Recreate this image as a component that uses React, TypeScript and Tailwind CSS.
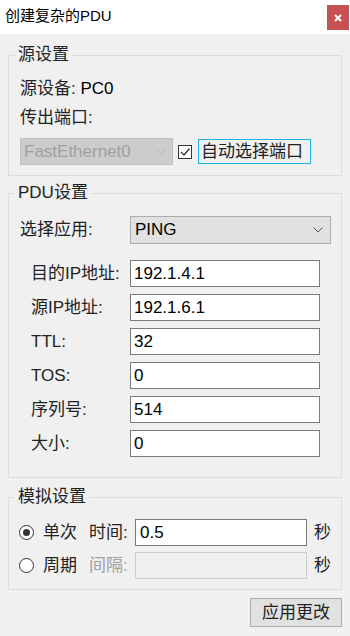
import type { ReactNode } from "react";

const FONT = "font-['Liberation_Sans','Noto_Sans_CJK_SC',sans-serif]";

function Chevron({ color }: { color: string }) {
  return (
    <svg width="10" height="6" viewBox="0 0 10 6" className="shrink-0">
      <path d="M0.5 0.5 L5 5 L9.5 0.5" fill="none" stroke={color} strokeWidth="1" />
    </svg>
  );
}

function Group({ title, className, children }: { title: string; className?: string; children: ReactNode }) {
  return (
    <fieldset className={"mx-2 border border-[#dcdcdc] " + (className ?? "")}>
      <legend className="ml-[6px] px-[3px] text-[17px] leading-[20px] text-[#222]">{title}</legend>
      {children}
    </fieldset>
  );
}

function Field({ label, value }: { label: string; value: string }) {
  return (
    <div className="flex h-[27px] items-center">
      <div className="w-[110px] pl-[11px] text-[17px] text-[#222]">{label}</div>
      <div className="flex h-[27px] w-[190px] items-center border border-[#7a7a7a] bg-white pl-[3px] text-[17px] text-black">
        {value}
      </div>
    </div>
  );
}

function Radio({ checked }: { checked?: boolean }) {
  return (
    <div className="flex h-[15px] w-[15px] items-center justify-center rounded-full border border-[#333] bg-white">
      {checked && <div className="h-[7px] w-[7px] rounded-full bg-[#333]" />}
    </div>
  );
}

export default function App() {
  return (
    <div className={"flex h-[636px] w-[350px] flex-col overflow-hidden bg-[#f0f0f0] " + FONT}>
      {/* title bar */}
      <div className="flex h-[34px] items-start justify-between bg-white">
        <div className="pl-[5px] pt-[6px] text-[15px] leading-[20px] text-black">创建复杂的PDU</div>
        <div className="mr-[1px] mt-[5px] flex h-[25px] w-[22px] items-center justify-center bg-[#c75050]">
          <svg width="8" height="8" viewBox="0 0 8 8">
            <path d="M1 1 L7 7 M7 1 L1 7" stroke="white" strokeWidth="2" />
          </svg>
        </div>
      </div>

      {/* 源设置 */}
      <Group title="源设置" className="mt-[11px]">
        <div className="pl-[11px] pb-[10px] pt-[14px]">
          <div className="h-[20px] text-[17px] leading-[20px] text-[#222]">
            源设备: <span className="text-black">PC0</span>
          </div>
          <div className="mt-[9px] h-[20px] text-[17px] leading-[20px] text-[#222]">传出端口:</div>
          <div className="mt-[10px] flex items-center">
            <div className="flex h-[27px] w-[153px] items-center justify-between border border-[#bfbfbf] bg-[#cccccc] pl-[3px] pr-[6px] text-[17px] text-[#a0a0a0]">
              <span>FastEthernet0</span>
              <Chevron color="#b4b4b4" />
            </div>
            <div className="ml-[5px] flex h-[14px] w-[14px] items-center justify-center border border-[#333] bg-white">
              <svg width="12" height="12" viewBox="0 0 12 12">
                <path d="M2 6 L5 9 L10.5 2.5" fill="none" stroke="#333" strokeWidth="1.3" />
              </svg>
            </div>
            <div className="ml-[6px] flex h-[25px] w-[113px] items-center whitespace-nowrap border border-[#1eb4e6] pl-[2px] text-[17px] text-[#222]">
              自动选择端口
            </div>
          </div>
        </div>
      </Group>

      {/* PDU设置 */}
      <Group title="PDU设置" className="mt-[7px]">
        <div className="pb-[20px] pl-[11px] pt-[13px]">
          <div className="flex h-[28px] items-center">
            <div className="w-[110px] text-[17px] text-[#222]">选择应用:</div>
            <div className="flex h-[28px] w-[201px] items-center justify-between border border-[#adadad] bg-[#e1e1e1] pl-[4px] pr-[7px] text-[17px] text-black">
              <span>PING</span>
              <Chevron color="#555" />
            </div>
          </div>
          <div className="mt-[16px] flex flex-col gap-[7px]">
            <Field label="目的IP地址:" value="192.1.4.1" />
            <Field label="源IP地址:" value="192.1.6.1" />
            <Field label="TTL:" value="32" />
            <Field label="TOS:" value="0" />
            <Field label="序列号:" value="514" />
            <Field label="大小:" value="0" />
          </div>
        </div>
      </Group>

      {/* 模拟设置 */}
      <Group title="模拟设置" className="mt-[9px]">
        <div className="flex flex-col gap-[6px] pb-[10px] pl-[10px] pt-[12px]">
          <div className="flex h-[27px] items-center text-[17px]">
            <Radio checked />
            <div className="ml-[9px] w-[46px] text-[#222]">单次</div>
            <div className="w-[46px] text-[#222]">时间:</div>
            <div className="flex h-[27px] w-[172px] items-center border border-[#7a7a7a] bg-white pl-[4px] text-black">
              0.5
            </div>
            <div className="ml-[7px] text-[#222]">秒</div>
          </div>
          <div className="flex h-[27px] items-center text-[17px]">
            <Radio />
            <div className="ml-[9px] w-[46px] text-[#222]">周期</div>
            <div className="w-[46px] text-[#a0a0a0]">间隔:</div>
            <div className="h-[27px] w-[172px] border border-[#cccccc] bg-[#f0f0f0]" />
            <div className="ml-[7px] text-[#222]">秒</div>
          </div>
        </div>
      </Group>

      <div className="mr-2 mt-[8px] flex justify-end">
        <button className="flex h-[29px] w-[92px] items-center justify-center border border-[#adadad] bg-[#e1e1e1] text-[17px] text-[#222]">
          应用更改
        </button>
      </div>
    </div>
  );
}
